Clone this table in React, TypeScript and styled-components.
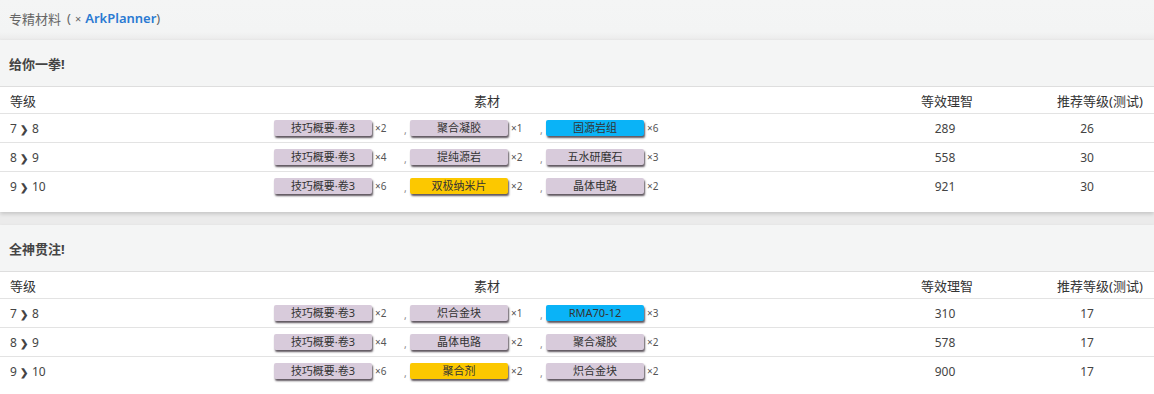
import React from 'react';
import styled, { createGlobalStyle } from 'styled-components';

// Types
type ChipKind = 'normal' | 'blue' | 'gold';

interface Material {
  name: string;
  count: number;
  kind?: ChipKind;
}

interface LevelRow {
  from: number;
  to: number;
  items: Material[];
  sanity: number;
  level: number;
}

interface SkillData {
  title: string;
  rows: LevelRow[];
}

const skills: SkillData[] = [
  {
    title: '给你一拳!',
    rows: [
      {
        from: 7,
        to: 8,
        items: [
          { name: '技巧概要·卷3', count: 2 },
          { name: '聚合凝胶', count: 1 },
          { name: '固源岩组', count: 6, kind: 'blue' },
        ],
        sanity: 289,
        level: 26,
      },
      {
        from: 8,
        to: 9,
        items: [
          { name: '技巧概要·卷3', count: 4 },
          { name: '提纯源岩', count: 2 },
          { name: '五水研磨石', count: 3 },
        ],
        sanity: 558,
        level: 30,
      },
      {
        from: 9,
        to: 10,
        items: [
          { name: '技巧概要·卷3', count: 6 },
          { name: '双极纳米片', count: 2, kind: 'gold' },
          { name: '晶体电路', count: 2 },
        ],
        sanity: 921,
        level: 30,
      },
    ],
  },
  {
    title: '全神贯注!',
    rows: [
      {
        from: 7,
        to: 8,
        items: [
          { name: '技巧概要·卷3', count: 2 },
          { name: '炽合金块', count: 1 },
          { name: 'RMA70-12', count: 3, kind: 'blue' },
        ],
        sanity: 310,
        level: 17,
      },
      {
        from: 8,
        to: 9,
        items: [
          { name: '技巧概要·卷3', count: 4 },
          { name: '晶体电路', count: 2 },
          { name: '聚合凝胶', count: 2 },
        ],
        sanity: 578,
        level: 17,
      },
      {
        from: 9,
        to: 10,
        items: [
          { name: '技巧概要·卷3', count: 6 },
          { name: '聚合剂', count: 2, kind: 'gold' },
          { name: '炽合金块', count: 2 },
        ],
        sanity: 900,
        level: 17,
      },
    ],
  },
];

const chipColors: Record<ChipKind, string> = {
  normal: '#d8cbdb',
  blue: '#0ab3f7',
  gold: '#fcc800',
};

const GlobalStyle = createGlobalStyle`
  html, body {
    margin: 0;
    padding: 0;
    background: #ebebeb;
    font-family: "Noto Sans", "Noto Sans CJK SC", sans-serif;
    color: #333;
  }
`;

const Page = styled.div`
  width: 1154px;
  height: 394px;
  overflow: hidden;
  background: #ebebeb;
`;

const TopBar = styled.div`
  height: 40px;
  display: flex;
  align-items: center;
  padding: 0 0 4px 9px;
  box-sizing: border-box;
  background: linear-gradient(to bottom, #f4f5f5 0%, #f3f4f4 80%, #ebebeb 100%);
  font-size: 13px;
  color: #666;
`;

const Paren = styled.span`
  margin: 0 4px 0 6px;
`;

const Times = styled.span`
  font-size: 11px;
  margin-right: 4px;
`;

const PlannerLink = styled.a`
  color: #2a7ad2;
  text-decoration: none;
  font-weight: 600;
  font-size: 13px;
`;

const Card = styled.section`
  background: #fff;
  box-shadow: 0 2px 4px rgba(0, 0, 0, 0.16);
  margin-bottom: 13px;
  padding-bottom: 12px;
`;

const CardHeader = styled.div`
  height: 47px;
  display: flex;
  align-items: center;
  padding: 0 9px;
  box-sizing: border-box;
  background: #f4f5f5;
  border-bottom: 1px solid #dedede;
  font-size: 13px;
  font-weight: 700;
  color: #444;
`;

const Row = styled.div<{ $head?: boolean }>`
  display: grid;
  grid-template-columns: 84px 786px 150px 134px;
  align-items: center;
  height: ${({ $head }) => ($head ? '26px' : '29px')};
  border-top: ${({ $head }) => ($head ? 'none' : '1px solid #e3e3e3')};
  box-sizing: border-box;
  font-size: ${({ $head }) => ($head ? '13px' : '12px')};
  color: ${({ $head }) => ($head ? '#333' : '#444')};
`;

const Cell = styled.div<{ $align?: 'left' | 'center'; $shift?: number }>`
  text-align: ${({ $align }) => $align || 'center'};
  padding-left: ${({ $align, $shift }) => ($align === 'left' ? 10 : $shift || 0)}px;
  white-space: nowrap;
`;

const Arrow = styled.span`
  font-weight: 700;
  font-size: 10px;
  margin: 0 4px 0 3px;
`;

const MaterialList = styled.div`
  display: flex;
  align-items: center;
  padding-left: 190px;
`;

const Item = styled.div`
  display: flex;
  align-items: center;
`;

const Chip = styled.span<{ $kind: ChipKind }>`
  width: 98px;
  height: 16px;
  line-height: 16px;
  border-radius: 2px;
  background: ${({ $kind }) => chipColors[$kind]};
  box-shadow: 1px 2px 2px rgba(40, 30, 40, 0.75);
  font-size: 11px;
  color: #333;
  text-align: center;
`;

const Count = styled.span`
  width: 32px;
  padding-left: 3px;
  box-sizing: border-box;
  font-size: 10px;
  color: #555;
`;

const Comma = styled.span`
  width: 6px;
  font-size: 10px;
  color: #888;
  margin-top: 4px;
`;

const SkillCard = ({ skill }: { skill: SkillData }) => (
  <Card>
    <CardHeader>{skill.title}</CardHeader>
    <Row $head>
      <Cell $align="left">等级</Cell>
      <Cell $shift={20}>素材</Cell>
      <Cell $shift={4}>等效理智</Cell>
      <Cell $shift={26}>推荐等级(测试)</Cell>
    </Row>
    {skill.rows.map((row) => (
      <Row key={row.from}>
        <Cell $align="left">
          {row.from}
          <Arrow>❯</Arrow>
          {row.to}
        </Cell>
        <MaterialList>
          {row.items.map((m, i) => (
            <Item key={m.name + i}>
              {i > 0 && <Comma>,</Comma>}
              <Chip $kind={m.kind || 'normal'}>{m.name}</Chip>
              <Count>×{m.count}</Count>
            </Item>
          ))}
        </MaterialList>
        <Cell>{row.sanity}</Cell>
        <Cell>{row.level}</Cell>
      </Row>
    ))}
  </Card>
);

export default function App() {
  return (
    <Page>
      <GlobalStyle />
      <TopBar>
        专精材料
        <Paren>(</Paren>
        <Times>×</Times>
        <PlannerLink href="#">ArkPlanner</PlannerLink>)
      </TopBar>
      {skills.map((s) => (
        <SkillCard key={s.title} skill={s} />
      ))}
    </Page>
  );
}
